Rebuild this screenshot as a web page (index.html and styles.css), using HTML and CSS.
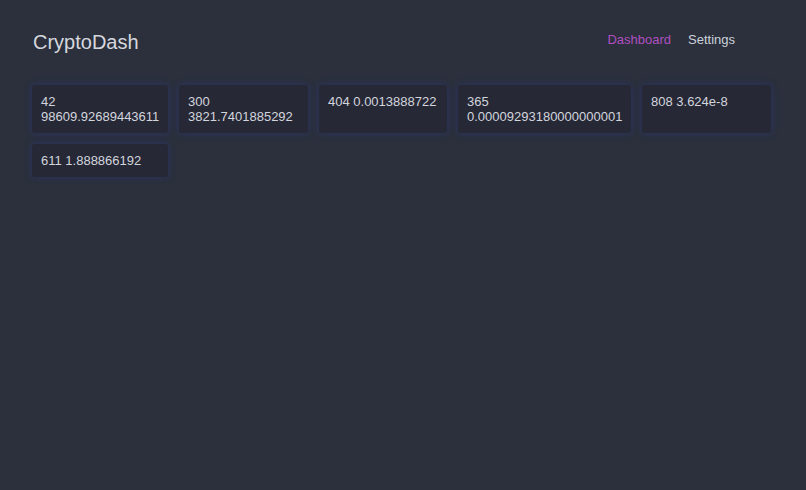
FILE: index.html
```html
<!DOCTYPE html>
<html>
<head>
<meta charset="utf-8">
<link rel="stylesheet" href="styles.css">
</head>
<body>
<div class="page">
  <header class="header">
    <div class="title">CryptoDash</div>
    <nav class="nav">
      <a class="nav-link active">Dashboard</a>
      <a class="nav-link">Settings</a>
    </nav>
  </header>
  <main class="cards">
    <div class="card">42 98609.92689443611</div>
    <div class="card">300 3821.7401885292</div>
    <div class="card">404 0.0013888722</div>
    <div class="card">365 0.00009293180000000001</div>
    <div class="card">808 3.624e-8</div>
    <div class="card">611 1.888866192</div>
  </main>
</div>
</body>
</html>
```
FILE: styles.css
```css
html, body {
  margin: 0;
  height: 100%;
  background: #2b303c;
}
body {
  font-family: "Liberation Sans", Arial, sans-serif;
  color: #d3d5dd;
}
.page {
  padding: 0 32px;
}
.header {
  display: flex;
  justify-content: space-between;
  align-items: flex-start;
  padding-top: 30px;
}
.title {
  font-size: 20px;
  line-height: 24px;
  color: #d6d7df;
  padding-left: 1px;
}
.nav {
  display: flex;
  gap: 17px;
  padding-right: 39px;
  padding-top: 2px;
}
.nav-link {
  font-size: 13px;
  line-height: 16px;
  color: #cdd0da;
  text-decoration: none;
}
.nav-link.active {
  color: #b04fc0;
}
.cards {
  display: grid;
  grid-template-columns: 136px 129px 128px 173px 129px;
  gap: 11px 11px;
  margin-top: 31px;
}
.card {
  background: #262836;
  box-shadow: 0 0 6px 1px rgba(40, 55, 140, 0.4);
  border-radius: 3px;
  padding: 9px 9px;
  font-size: 13px;
  line-height: 15px;
  color: #d3d5dd;
}
```
